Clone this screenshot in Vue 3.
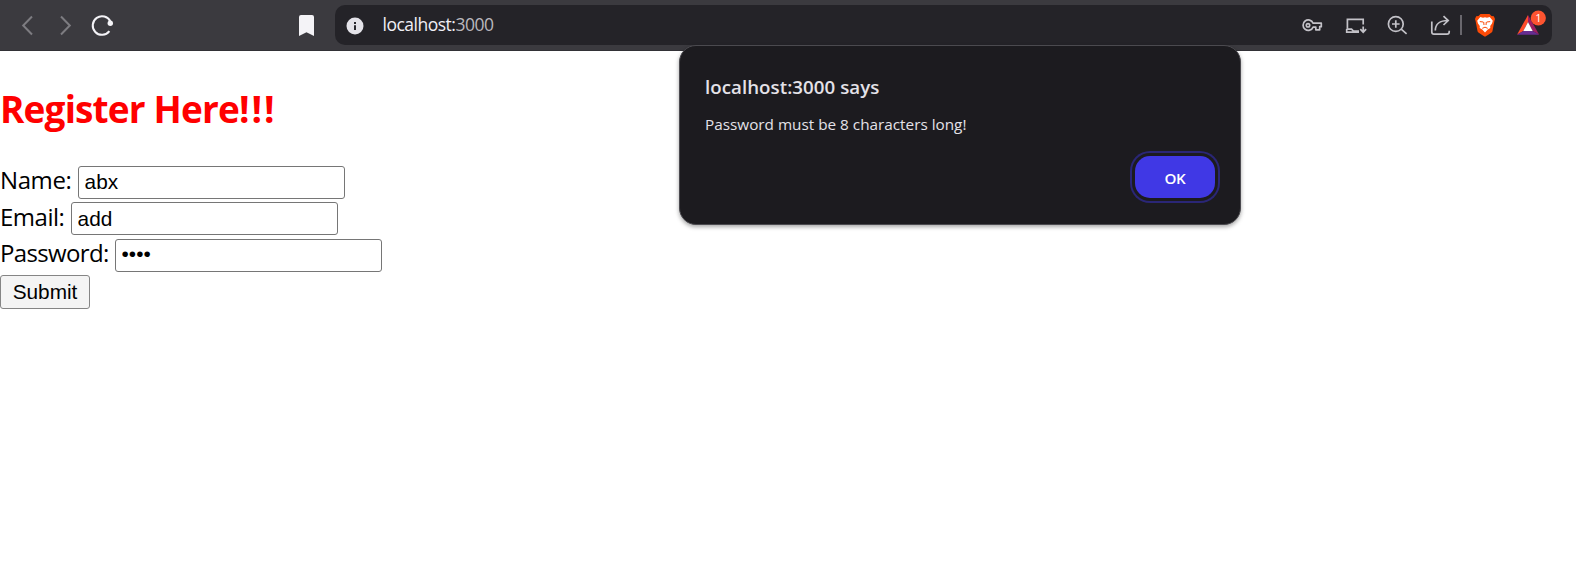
<script setup>
import { ref } from 'vue'

const name = ref('abx')
const email = ref('add')
const password = ref('1234')
</script>

<template>
  <div class="window">
    <header class="toolbar">
      <svg class="nav" width="128" height="40" viewBox="0 5 128 40" fill="none">
        <path d="M32 16.5 23.2 25.5 32 34.5" stroke="#7d7c81" stroke-width="2" />
        <path d="M61 16.5 69.8 25.5 61 34.5" stroke="#7d7c81" stroke-width="2" />
        <path d="M109.4 31.2A9.3 9.3 0 1 1 110.4 21.5" stroke="#f4f3f7" stroke-width="2" />
        <circle cx="110.3" cy="23.3" r="2.7" fill="#f4f3f7" />
      </svg>
      <svg class="bookmark" width="18" height="40" viewBox="298 5 18 40">
        <path d="M301 15H312Q314 15 314 17V36L306.5 32.3 299 36V17Q299 15 301 15Z" fill="#f4f3f7" />
      </svg>
      <div class="address">
        <svg width="18" height="40" viewBox="346 5 18 40">
          <circle cx="355" cy="26" r="8.5" fill="#e4e3e9" />
          <path d="M354 22h2v2h-2zM354 25.2h2v4.8h-2z" fill="#29282e" />
        </svg>
        <span class="url">localhost:<span class="port">3000</span></span>
        <svg class="actions" width="250" height="40" viewBox="1300 5 250 40" fill="none">
          <g stroke="#c3c2c8" stroke-width="1.7">
            <path d="M1313.1 23.2H1321.3V26.7H1319.7V29.8H1315.8V27.1H1313.1A5.2 5.2 0 1 1 1313.1 23.2Z" stroke-linejoin="round" />
            <circle cx="1308" cy="25.3" r="1.7" />
            <path d="M1347.4 28.8V19.4H1363.2V24.5" />
            <path d="M1346.7 29.2H1351.5L1353.5 31.2H1359M1346.7 29V32.2H1359" />
            <path d="M1363.2 26.5V32M1360.3 29.2 1363.2 32.2 1366.1 29.2" />
            <circle cx="1395.8" cy="24" r="7.4" />
            <path d="M1401.2 29.2 1406.6 33.8M1392 24H1399.6M1395.8 20.2V27.8" />
            <path d="M1431.8 21.5V32Q1431.8 34.2 1434 34.2H1447Q1449.2 34.2 1449.2 32V30.8" />
            <path d="M1435.3 30.5C1435.3 24 1440 20.5 1448 20.5M1443.5 16.2 1448.2 20.5 1443.5 25" />
          </g>
          <path d="M1461 15V35" stroke="#807f85" stroke-width="1.5" />
          <path d="M1480.5 14H1489.5L1491.5 16 1493.8 16.2 1495 19 1494.3 21.5 1492.4 31.5Q1491.5 33 1485 36.8 1478.5 33 1477.6 31.5L1475.7 21.5 1475 19 1476.2 16.2 1478.5 16Z" fill="#fb4b08" />
          <path d="M1480.3 17 1483 17.7 1485 17.2 1487 17.7 1489.7 17 1492.8 20.7 1492 23.5 1490.2 26 1490.3 28 1487.8 29.5 1485 32.5 1482.2 29.5 1479.7 28 1479.8 26 1478 23.5 1477.2 20.7Z" fill="#fff" />
          <path d="M1479.8 21.6 1483.3 22M1486.7 22 1490.2 21.6M1483.7 22 1484 25M1486.3 22 1486 25M1482.3 28.3 1485 27.2 1487.7 28.3" stroke="#fb4b08" stroke-width="1" />
          <path d="M1528 15 1517 34.7 1523.3 31 1528 22Z" fill="#ff4b2b" />
          <path d="M1528 15 1539.2 34.7 1532.7 31 1528 22Z" fill="#9e1f63" />
          <path d="M1517 34.7 1523.3 31H1532.7L1539.2 34.7Z" fill="#662d91" />
          <path d="M1528 22 1532.7 31H1523.3Z" fill="#fff" />
          <circle cx="1538.3" cy="18" r="7.6" fill="#fc5430" />
          <text x="1538.3" y="21.9" text-anchor="middle" class="badge">1</text>
        </svg>
      </div>
    </header>

    <main class="page">
      <h1>Register Here<span class="bangs">!!!</span></h1>
      <form @submit.prevent>
        <div class="row">
          <label class="name" for="name">Name:</label>
          <input id="name" v-model="name" type="text" />
        </div>
        <div class="row">
          <label class="email" for="email">Email:</label>
          <input id="email" v-model="email" type="text" />
        </div>
        <div class="row">
          <label class="password" for="password">Password:</label>
          <input id="password" v-model="password" type="password" />
        </div>
        <button class="submit" type="submit">Submit</button>
      </form>
    </main>

    <section class="dialog" role="alertdialog">
      <h2>localhost:3000 says</h2>
      <p>Password must be 8 characters long!</p>
      <button class="ok" type="button">OK</button>
    </section>
  </div>
</template>

<style>
body {
  background: #fff;
  overflow: hidden;
}
</style>

<style scoped>
.window {
  position: relative;
  width: 1576px;
  height: 572px;
  overflow: hidden;
  background: #fff;
  font-family: "Open Sans", "Noto Sans", sans-serif;
}
.window *,
.window {
  box-sizing: border-box;
}
svg {
  display: block;
  flex: none;
}
.toolbar {
  display: flex;
  align-items: flex-start;
  height: 51px;
  padding-top: 5px;
  background: #3b3a3f;
  border-bottom: 1px solid #323136;
}
.bookmark {
  margin-left: 170px;
}
.address {
  display: flex;
  align-items: center;
  width: 1217px;
  height: 40px;
  margin-left: 19px;
  padding-left: 11px;
  border-radius: 10px;
  background: #242328;
}
.url {
  margin-left: 18.5px;
  font-size: 17.5px;
  line-height: 38px;
  height: 40px;
  letter-spacing: -0.5px;
  color: #f0eff5;
  white-space: nowrap;
}
.port {
  color: #b9b8be;
}
.actions {
  margin-left: auto;
  margin-right: 2px;
}
.badge {
  font: 11px "Open Sans", sans-serif;
  fill: #fff;
}
.page {
  padding-top: 32px;
}
h1 {
  margin: 0 0 33px;
  font-size: 37px;
  line-height: 51px;
  height: 50px;
  letter-spacing: -0.85px;
  color: #f00;
}
.bangs {
  letter-spacing: 1.9px;
}
.row {
  display: flex;
  align-items: flex-start;
  height: 33px;
  margin-bottom: 3.4px;
}
label {
  flex: none;
  font-size: 24px;
  line-height: 27px;
  color: #000;
  white-space: nowrap;
}
.name {
  width: 78px;
  letter-spacing: -0.4px;
}
.email {
  width: 71px;
  line-height: 29px;
  letter-spacing: -0.5px;
}
.password {
  width: 115px;
  letter-spacing: -0.65px;
}
input {
  width: 267px;
  height: 33px;
  margin: 0;
  padding: 0 5px 2px 5.6px;
  border: 1px solid #767676;
  border-radius: 3px;
  background: #fff;
  color: #000;
  font: 20.8px "Liberation Sans", Arial, sans-serif;
  outline: none;
}
#email {
  padding-bottom: 0.5px;
}
.submit {
  display: block;
  width: 90px;
  height: 34px;
  padding: 0;
  border: 1px solid #858585;
  border-radius: 3px;
  background: #f4f4f4;
  color: #000;
  font: 20.8px "Liberation Sans", Arial, sans-serif;
}
.dialog {
  position: absolute;
  left: 679px;
  top: 45px;
  width: 562px;
  height: 180px;
  display: flex;
  flex-direction: column;
  padding: 27px 25px 26px;
  border: 1px solid #4b4a4f;
  border-radius: 17px;
  background: #1c1b1f;
  box-shadow: 0 2px 4px rgba(0, 0, 0, 0.35);
  color: #e4e2e8;
}
h2 {
  margin: 0;
  font-size: 18.7px;
  font-weight: 600;
  line-height: 28px;
  letter-spacing: 0.05px;
}
p {
  margin: 11px 0 0;
  font-size: 15.3px;
  line-height: 24px;
  letter-spacing: 0;
}
.ok {
  align-self: flex-end;
  width: 80px;
  height: 42px;
  margin-top: 20px;
  padding: 2px 0 0;
  border: 0;
  border-radius: 15px;
  background: #4038e5;
  box-shadow: 0 0 0 3px #1c1b1f, 0 0 0 5px #2a2676;
  color: #fff;
  font: 600 15.2px "Open Sans", sans-serif;
  letter-spacing: -0.3px;
}
</style>
